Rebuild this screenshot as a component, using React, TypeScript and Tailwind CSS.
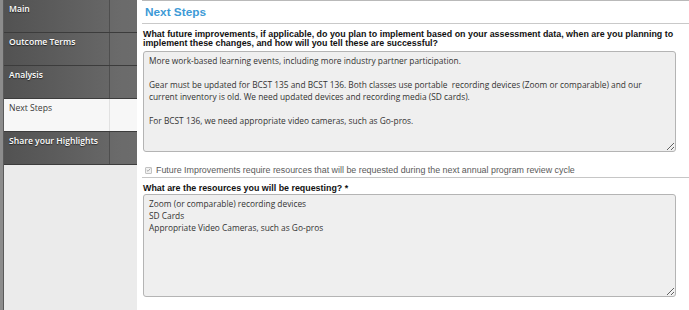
import React from 'react';

const navItems = [
  { label: 'Main', active: false },
  { label: 'Outcome Terms', active: false },
  { label: 'Analysis', active: false },
  { label: 'Next Steps', active: true },
  { label: 'Share your Highlights', active: false },
];

const improvementsText =
  'More work-based learning events, including more industry partner participation.\n\n' +
  'Gear must be updated for BCST 135 and BCST 136. Both classes use portable  recording devices (Zoom or comparable) and our\n' +
  'current inventory is old. We need updated devices and recording media (SD cards).\n\n' +
  'For BCST 136, we need appropriate video cameras, such as Go-pros.';

const resourcesText =
  'Zoom (or comparable) recording devices\nSD Cards\nAppropriate Video Cameras, such as Go-pros';

const NavItem = ({ label, active }: { label: string; active: boolean }) => (
  <div
    className={`flex h-[33px] border-b border-[#3c3c3c] ${
      active ? 'bg-[#f7f7f7]' : 'bg-gradient-to-r from-[#525252] to-[#6c6c6c]'
    }`}
  >
    <div
      className={`w-[105px] whitespace-nowrap pl-[5px] pt-[3px] text-[8.6px] leading-[13px] ${
        active
          ? 'text-[#3a3a3a] font-normal'
          : 'text-white font-semibold [text-shadow:0_1px_1px_rgba(0,0,0,0.6)]'
      }`}
    >
      {label}
    </div>
    <div
      className={`flex-1 border-l ${
        active ? 'border-[#e2e2e2]' : 'border-[#4e4e4e] bg-[#6e6e6e]/40'
      }`}
    />
  </div>
);

const FieldArea = ({ value, height }: { value: string; height: string }) => (
  <textarea
    readOnly
    wrap="off"
    defaultValue={value}
    className={`block w-[533px] ${height} ml-[1px] resize overflow-hidden rounded-[3px] border border-[#b4b4b4] bg-[#efefef] pl-[5px] pr-[4px] pt-[3px] text-[8.35px] leading-[12px] text-[#333] outline-none [font-family:'Open_Sans',sans-serif]`}
  />
);

export default function App() {
  return (
    <div className="flex h-[310px] w-[689px] overflow-hidden bg-white [font-family:'Liberation_Sans',Arial,sans-serif]">
      {/* outer frame strip */}
      <div className="w-[4px] shrink-0 border-r border-[#5a5a5a] bg-[#8c8c8c]" />

      {/* side navigation */}
      <nav className="flex w-[133px] shrink-0 flex-col bg-[#ebebeb] [font-family:'Open_Sans',sans-serif]">
        {navItems.map((item) => (
          <NavItem key={item.label} {...item} />
        ))}
      </nav>

      {/* form content */}
      <main className="ml-[5px] flex-1 border-t border-[#b9b9b9]">
        <div className="h-[23px] border-b border-[#c9c9c9] pl-[3px] pt-[4px]">
          <h1 className="text-[11.8px] font-bold leading-[15px] text-[#3d9ad6]">Next Steps</h1>
        </div>

        <p className="mt-[6px] whitespace-nowrap pl-[1px] text-[8.9px] font-bold leading-[9px] text-[#111]">
          What future improvements, if applicable, do you plan to implement based on your assessment data, when are you planning to
          <br />
          implement these changes, and how will you tell these are successful?
        </p>
        <div className="mt-[3px]">
          <FieldArea value={improvementsText} height="h-[101px]" />
        </div>

        <label className="mt-[11px] flex h-[15px] items-center border-b border-[#c6c6c6] pl-[3px]">
          <span className="flex h-[7px] w-[7px] items-center justify-center rounded-[1px] border border-[#c2c2c2] bg-[#f2f2f2]">
            <svg viewBox="0 0 8 8" className="h-[6px] w-[6px]">
              <path d="M1.2 4.2 L3.2 6 L6.8 1.8" fill="none" stroke="#9a9a9a" strokeWidth="1.3" />
            </svg>
          </span>
          <span className="ml-[4px] whitespace-nowrap text-[8.9px] leading-[12px] text-[#5a5a5a]">
            Future Improvements require resources that will be requested during the next annual program review cycle
          </span>
        </label>

        <p className="mt-[6px] pl-[1px] text-[8.9px] font-bold leading-[9px] text-[#111]">
          What are the resources you will be requesting? *
        </p>
        <div className="mt-[1px]">
          <FieldArea value={resourcesText} height="h-[103px]" />
        </div>
      </main>
    </div>
  );
}
